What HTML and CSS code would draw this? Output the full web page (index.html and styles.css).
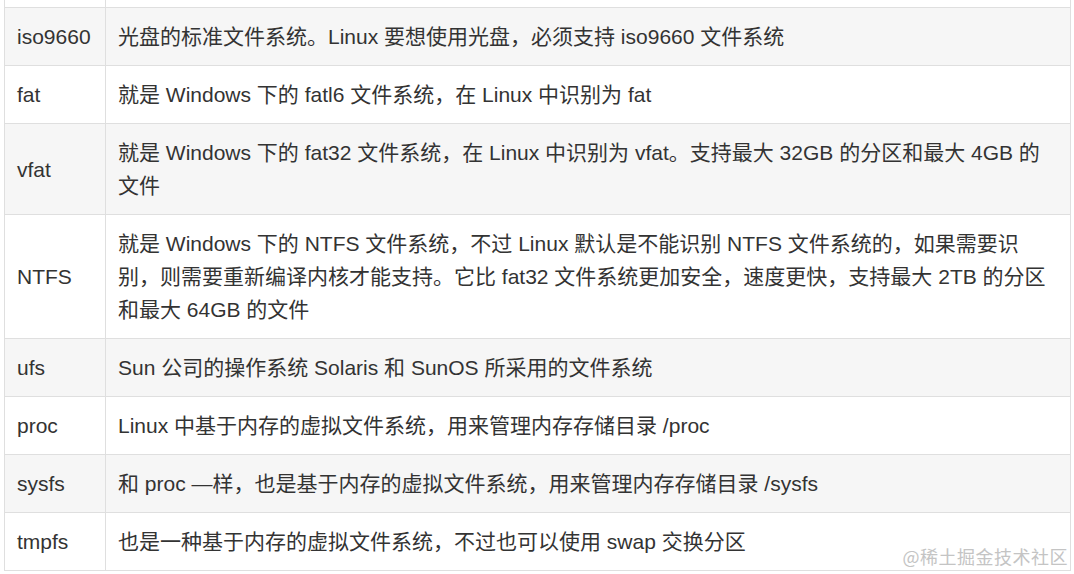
FILE: index.html
```html
<!DOCTYPE html>
<html lang="zh-CN">
<head>
<meta charset="utf-8">
<title>文件系统</title>
<link rel="stylesheet" href="styles.css">
</head>
<body>
<div class="page">
  <table class="fs-table">
    <tbody>
      <tr class="row-cut"><td class="name">&nbsp;</td><td class="desc">&nbsp;</td></tr>
      <tr><td class="name">iso9660</td><td class="desc">光盘的标准文件系统。Linux 要想使用光盘，必须支持 iso9660 文件系统</td></tr>
      <tr><td class="name">fat</td><td class="desc">就是 Windows 下的 fatl6 文件系统，在 Linux 中识别为 fat</td></tr>
      <tr><td class="name">vfat</td><td class="desc">就是 Windows 下的 fat32 文件系统，在 Linux 中识别为 vfat。支持最大 32GB 的分区和最大 4GB 的文件</td></tr>
      <tr><td class="name">NTFS</td><td class="desc">就是 Windows 下的 NTFS 文件系统，不过 Linux 默认是不能识别 NTFS 文件系统的，如果需要识别，则需要重新编译内核才能支持。它比 fat32 文件系统更加安全，速度更快，支持最大 2TB 的分区和最大 64GB 的文件</td></tr>
      <tr><td class="name">ufs</td><td class="desc">Sun 公司的操作系统 Solaris 和 SunOS 所采用的文件系统</td></tr>
      <tr><td class="name">proc</td><td class="desc">Linux 中基于内存的虚拟文件系统，用来管理内存存储目录 /proc</td></tr>
      <tr><td class="name">sysfs</td><td class="desc">和 proc —样，也是基于内存的虚拟文件系统，用来管理内存存储目录 /sysfs</td></tr>
      <tr><td class="name">tmpfs</td><td class="desc">也是一种基于内存的虚拟文件系统，不过也可以使用 swap 交换分区</td></tr>
    </tbody>
  </table>
  <div class="watermark">@稀土掘金技术社区</div>
</div>
</body>
</html>
```

FILE: styles.css
```css
html, body {
  margin: 0;
  padding: 0;
  background: #ffffff;
}

.page {
  position: relative;
  width: 1074px;
  height: 574px;
  overflow: hidden;
  padding-left: 4px;
  box-sizing: border-box;
}

.fs-table {
  border-collapse: collapse;
  width: 1067px;
  margin-top: -51px;
  font-family: "Liberation Sans", "Noto Sans CJK SC", sans-serif;
  font-size: 21px;
  line-height: 33px;
  color: #333333;
}

.fs-table td {
  border: 1px solid #dfdfdf;
  padding: 12px 12px;
  vertical-align: middle;
  text-align: left;
}

.fs-table td.name {
  width: 76px;
}

.fs-table tr:nth-child(odd) {
  background: #ffffff;
}

.fs-table tr:nth-child(even) {
  background: #f6f6f6;
}

.watermark {
  position: absolute;
  right: 6px;
  bottom: 7px;
  font-family: "Noto Sans CJK SC", sans-serif;
  font-size: 18px;
  line-height: 22px;
  color: #c4c4c4;
  letter-spacing: 0.5px;
}
```
